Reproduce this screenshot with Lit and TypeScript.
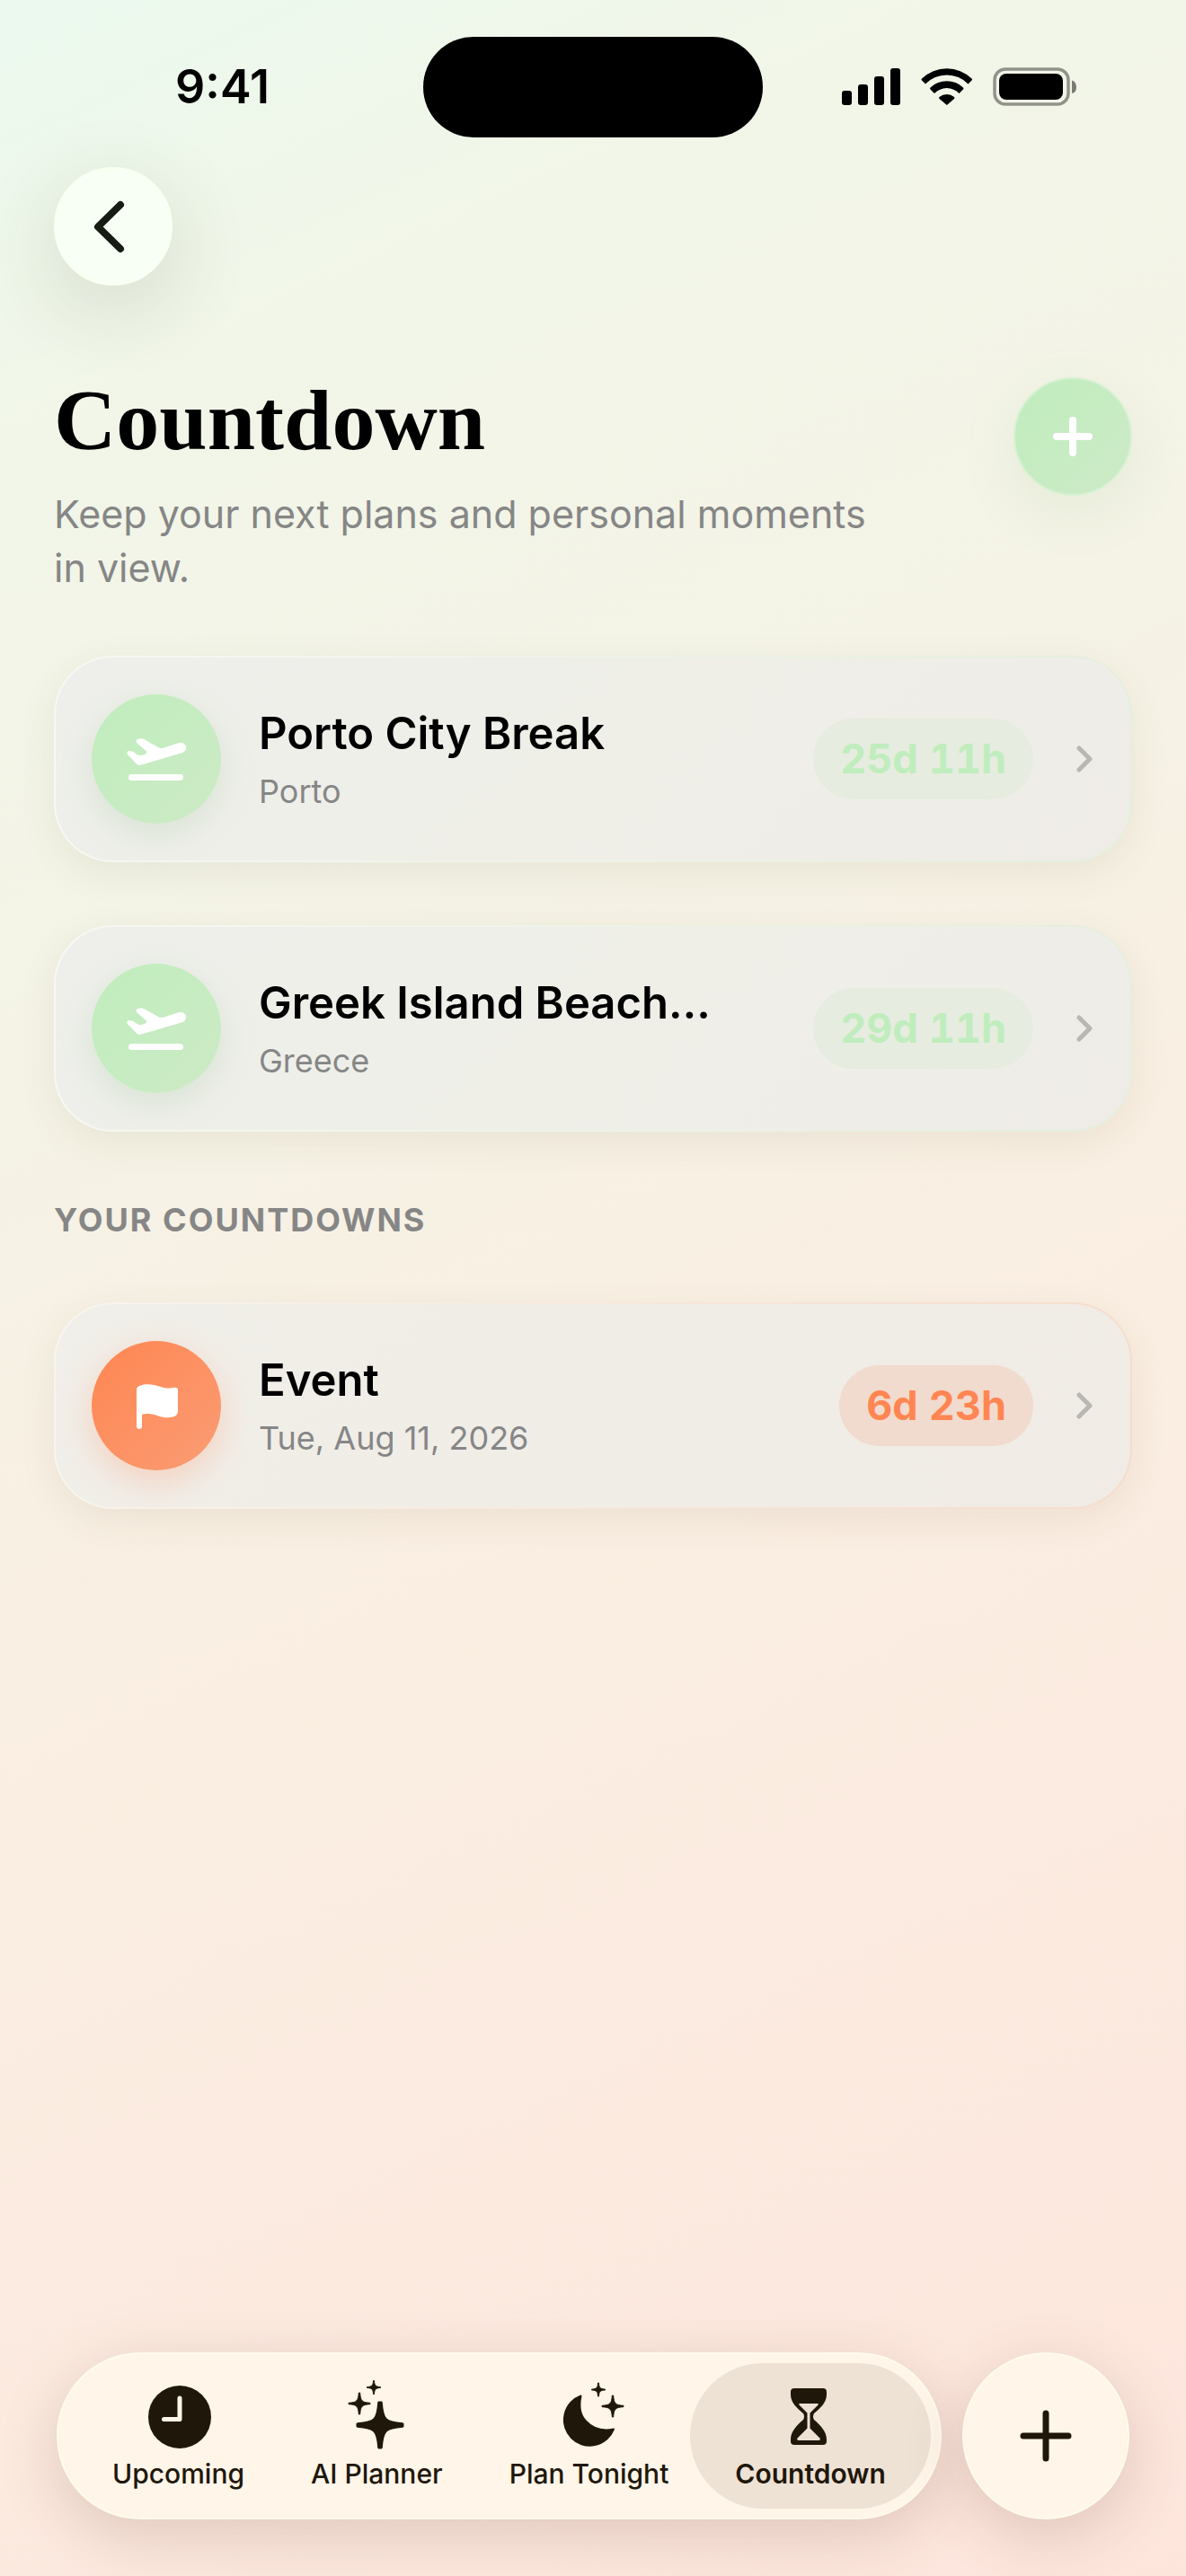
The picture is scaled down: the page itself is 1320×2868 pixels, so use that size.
import { LitElement, html, css, svg } from "lit";
import { customElement, property } from "lit/decorators.js";
import { classMap } from "lit/directives/class-map.js";

/** Four-pointed star with soft tips. */
const star = (cx: number, cy: number, r: number) => {
  const t = r * 0.05;
  const k = r * 0.22;
  const m = r * 0.1;
  return svg`<path stroke="currentColor" stroke-width=${r > 20 ? 3 : 1} stroke-linejoin="round" d="
    M${cx - t} ${cy - r + 1}
    C${cx - m} ${cy - k} ${cx - k} ${cy - m} ${cx - r + 1} ${cy - t}
    V${cy + t}
    C${cx - k} ${cy + m} ${cx - m} ${cy + k} ${cx - t} ${cy + r - 1}
    H${cx + t}
    C${cx + m} ${cy + k} ${cx + k} ${cy + m} ${cx + r - 1} ${cy + t}
    V${cy - t}
    C${cx + k} ${cy - m} ${cx + m} ${cy - k} ${cx + t} ${cy - r + 1}
    Z"/>`;
};

const icons = {
  departure: html`<svg viewBox="0 0 72 72" fill="currentColor" aria-hidden="true">
    <path d="M14 41.5L4 31C2.5 29 4 26.8 6 27C8 27.2 9.500 27.400 11 28.500Q17 33.500 21 31.500Q27 29.500 25 27.500L14 18C12.800 16 14 14.500 16 13.800C18 12.800 20 13 22 14L39 23.400Q41 24.500 43.500 23.700L60 18.500C64 17.200 68 18.600 69 21.800C69.800 25 68 28 64.500 29.300L21 42C18 43 16 43.200 14 41.500Z"/>
    <rect x="5" y="53" width="61" height="7" rx="3.500"/>
  </svg>`,
  flag: html`<svg viewBox="0 0 72 72" fill="currentColor" aria-hidden="true">
    <path d="M14 18Q14 15.500 16 14.500C24 10.500 33 12.500 41 15C47 17 51 17 56 15.800Q60 15 60 19V41.500Q60 46.500 55.500 48.200C50 50 44 49.500 38 47.500C31 45 26 44.500 20 45.800V59Q20 62 17 62Q14 62 14 59Z"/>
  </svg>`,
  clock: html`<svg viewBox="0 0 80 80" aria-hidden="true">
    <circle cx="41" cy="43" r="35" fill="currentColor"/>
    <path d="M41 22V45.500H23.500" fill="none" stroke="#fff6ea" stroke-width="5" stroke-linecap="round" stroke-linejoin="round"/>
  </svg>`,
  sparkles: html`<svg viewBox="0 0 80 80" fill="currentColor" aria-hidden="true">
    ${star(44, 52, 26)}${star(21, 28, 13)}${star(37, 10, 8.5)}
  </svg>`,
  moon: html`<svg viewBox="0 0 80 80" fill="currentColor" aria-hidden="true">
    <path stroke="currentColor" stroke-width="2" stroke-linejoin="round" d="M31.500 19.500C29 31 30.500 41 37.500 48C45 56 56 59 68 56.500A28.500 28.500 0 1 1 31.500 19.500Z"/>
    ${star(67, 31, 13)}${star(51, 12.5, 8.5)}
  </svg>`,
  hourglass: html`<svg viewBox="0 0 80 80" fill="currentColor" aria-hidden="true">
    <path fill-rule="evenodd" d="M22 11H54Q58 11 58 15V18C58 27 51 33 44 39Q42 42.500 44 46C51 52 58 59 58 68V70Q58 74 54 74H22Q18 74 18 70V68C18 59 25 52 32 46Q34 42.500 32 39C25 33 18 27 18 18V15Q18 11 22 11ZM28 28Q26.500 28 27.500 29.500L36.500 38.500V55.500L25.500 66.500Q24.500 69 27 69H49Q51.500 69 50.500 66.500L39.500 55.500V38.500L48.500 29.500Q49.500 28 48 28Z"/>
  </svg>`,
};

type IconName = keyof typeof icons;

interface Countdown {
  title: string;
  detail: string;
  left: string;
  icon: IconName;
  tone: "mint" | "coral";
}

const plans: Countdown[] = [
  { title: "Porto City Break", detail: "Porto", left: "25d 11h", icon: "departure", tone: "mint" },
  { title: "Greek Island Beach…", detail: "Greece", left: "29d 11h", icon: "departure", tone: "mint" },
];

const personal: Countdown[] = [
  { title: "Event", detail: "Tue, Aug 11, 2026", left: "6d 23h", icon: "flag", tone: "coral" },
];

const tabs: { label: string; icon: IconName }[] = [
  { label: "Upcoming", icon: "clock" },
  { label: "AI Planner", icon: "sparkles" },
  { label: "Plan Tonight", icon: "moon" },
  { label: "Countdown", icon: "hourglass" },
];

@customElement("status-bar")
export class StatusBar extends LitElement {
  static styles = css`
    :host {
      display: grid;
      grid-template-columns: 1fr 378px 1fr;
      align-items: center;
      height: 112px;
      padding: 41px 60px 0;
    }
    .time {
      justify-self: center;
      font-size: 52px;
      line-height: 60px;
      font-weight: 600;
      padding-right: 36px;
    }
    .island {
      height: 112px;
      border-radius: 56px;
      background: #000;
    }
    .signals {
      justify-self: end;
      display: block;
      width: 264px;
      height: 48px;
      margin-right: 60px;
    }
  `;

  render() {
    return html`
      <div class="time">9:41</div>
      <div class="island"></div>
      <svg class="signals" viewBox="0 0 264 48" role="img" aria-label="Signal, Wi-Fi and battery">
        <rect x="1" y="28" width="11" height="16" rx="3"/>
        <rect x="19" y="21" width="11" height="23" rx="3"/>
        <rect x="37" y="12" width="11" height="32" rx="3"/>
        <rect x="55" y="3" width="11" height="41" rx="3"/>
        <path d="M90 14.500A40 40 0 0 1 145.500 14.500Q146.500 15.500 145.500 16.500L141.500 20.500A33 33 0 0 0 94 20.500L90 16.500Q89 15.500 90 14.500Z"/>
        <path d="M99.500 24.500A26.500 26.500 0 0 1 136 24.500Q137 25.500 136 26.500L131.500 31A19 19 0 0 0 104 31L99.500 26.500Q98.500 25.500 99.500 24.500Z"/>
        <path d="M109.500 35A13 13 0 0 1 126 35Q127 36 126 37L117.800 44L109.500 37Q108.500 36 109.500 35Z"/>
        <rect x="171" y="4" width="82" height="39" rx="12" fill="none" stroke="#000" stroke-opacity=".4" stroke-width="3.500"/>
        <rect x="176" y="9" width="71" height="29" rx="8"/>
        <path d="M257 16.500Q262 18 262 24T257 31Z" fill-opacity=".5"/>
      </svg>
    `;
  }
}

@customElement("countdown-card")
export class CountdownCard extends LitElement {
  @property({ attribute: false }) item!: Countdown;

  static styles = css`
    :host {
      display: block;
    }
    .card {
      box-sizing: border-box;
      width: 100%;
      display: flex;
      align-items: center;
      padding: 41px 40px;
      border: 2px solid transparent;
      border-radius: 66px;
      font: inherit;
      color: #000;
      text-align: left;
      box-shadow: 0 12px 42px rgba(90, 80, 40, 0.08);
    }
    .mint {
      --tone: #c0edbd;
      --tone-end: #cdeac6;
      --pill: #e6ecdf;
      --glow: rgba(120, 180, 120, 0.18);
      background: linear-gradient(135deg, #eeefeb, #efefe8 50%, #efece8) padding-box,
        linear-gradient(100deg, #f7f8f3, #e5eedc) border-box;
    }
    .coral {
      --tone: #ff8652;
      --tone-end: #fa9c74;
      --pill: #f1dace;
      --glow: rgba(255, 134, 82, 0.28);
      background: linear-gradient(135deg, #f1efe9, #f0ebe5) padding-box,
        linear-gradient(100deg, #f8f5ef, #f6dccb) border-box;
    }
    .badge {
      flex: none;
      display: grid;
      place-items: center;
      width: 144px;
      height: 144px;
      margin-right: 42px;
      border-radius: 50%;
      color: #fff;
      background: linear-gradient(135deg, var(--tone), var(--tone-end));
      box-shadow: 0 12px 36px var(--glow);
    }
    .badge svg {
      width: 72px;
      height: 72px;
    }
    .text {
      flex: 1;
      min-width: 0;
      display: flex;
      flex-direction: column;
      gap: 12px;
    }
    .title {
      font-size: 49px;
      line-height: 60px;
      font-weight: 600;
      white-space: nowrap;
    }
    .detail {
      font-size: 36px;
      line-height: 44px;
      color: #868686;
    }
    .left {
      flex: none;
      padding: 15px 30px;
      border-radius: 45px;
      font-size: 45px;
      line-height: 60px;
      font-weight: 700;
      font-variant-numeric: tabular-nums;
      color: var(--tone);
      background: var(--pill);
    }
    .chevron {
      flex: none;
      width: 20px;
      height: 32px;
      margin-left: 48px;
    }
  `;

  render() {
    const { title, detail, left, icon, tone } = this.item;
    return html`
      <button class=${classMap({ card: true, [tone]: true })} type="button">
        <span class="badge">${icons[icon]}</span>
        <span class="text">
          <span class="title">${title}</span>
          <span class="detail">${detail}</span>
        </span>
        <span class="left">${left}</span>
        <svg class="chevron" viewBox="0 0 20 32" fill="none" stroke="#b9b7b4" stroke-width="5" stroke-linecap="round" stroke-linejoin="round" aria-hidden="true">
          <path d="M3 4L15 16L3 28"/>
        </svg>
      </button>
    `;
  }
}

@customElement("tab-bar")
export class TabBar extends LitElement {
  @property() selected = "Countdown";

  static styles = css`
    :host {
      display: flex;
      justify-content: space-between;
      padding: 0 63px 63px;
    }
    .tabs,
    .add {
      box-sizing: border-box;
      height: 186px;
      border-radius: 93px;
      border: 2px solid #fffbec;
      background: #fff5e9;
      color: #20170b;
      box-shadow: 0 18px 66px rgba(110, 70, 55, 0.2);
    }
    .tabs {
      display: flex;
      padding: 10px;
    }
    .tab {
      display: flex;
      flex-direction: column;
      align-items: center;
      padding: 17px 50px 0;
      border: 0;
      border-radius: 81px;
      background: none;
      color: inherit;
      font: inherit;
      font-size: 30px;
      line-height: 36px;
      font-weight: 500;
      white-space: nowrap;
    }
    .tab + .tab {
      margin-left: -26px;
    }
    .tab svg {
      display: block;
      width: 80px;
      height: 80px;
      margin-bottom: 8px;
    }
    .selected {
      background: #eee2d5;
      font-weight: 600;
    }
    .add {
      display: grid;
      place-items: center;
      width: 186px;
      padding: 0;
    }
    .add svg {
      width: 60px;
      height: 60px;
    }
  `;

  render() {
    return html`
      <nav class="tabs" aria-label="Main">
        ${tabs.map(
          (tab) => html`
            <button
              type="button"
              class=${classMap({ tab: true, selected: tab.label === this.selected })}
              @click=${() => (this.selected = tab.label)}
            >
              ${icons[tab.icon]}<span>${tab.label}</span>
            </button>
          `,
        )}
      </nav>
      <button class="add" type="button" aria-label="New plan">
        <svg viewBox="0 0 60 60" fill="none" stroke="currentColor" stroke-width="7" stroke-linecap="round" aria-hidden="true">
          <path d="M30 5V55M5 30H55"/>
        </svg>
      </button>
    `;
  }
}

@customElement("app-root")
export class AppRoot extends LitElement {
  static styles = css`
    :host {
      display: flex;
      flex-direction: column;
      min-height: 100vh;
      font-family: Inter, "Liberation Sans", sans-serif;
      color: #000;
      background: linear-gradient(155deg, #ebf9ee 0%, #f1f6e8 14%, #f4f3e6 34%, #f9efe2 54%, #fcebe0 74%, #fde5dc 100%);
    }
    .content {
      flex: 1;
      padding: 33px 60px 60px;
    }
    .round {
      display: grid;
      place-items: center;
      flex: none;
      box-sizing: border-box;
      width: 132px;
      height: 132px;
      padding: 0;
      border-radius: 50%;
    }
    .round svg {
      width: 60px;
      height: 60px;
    }
    .back {
      color: #171c12;
      background: #f8fff4;
      border: 2px solid #fafff0;
      box-shadow: 0 24px 90px rgba(60, 70, 40, 0.15);
    }
    .create {
      color: #fff;
      border: 2px solid #d8f1d3;
      background: linear-gradient(135deg, #c0edbd, #cdeac8);
      box-shadow: 0 18px 60px rgba(150, 190, 130, 0.14);
    }
    .intro {
      display: flex;
      align-items: flex-start;
      justify-content: space-between;
      margin: 102px 0 68px;
    }
    .heading {
      display: flex;
      flex-direction: column;
      gap: 26px;
      max-width: 940px;
    }
    h1 {
      margin: 0;
      font-family: "Liberation Serif", serif;
      font-size: 96px;
      line-height: 96px;
      font-weight: 700;
    }
    .lead {
      margin: 0;
      font-size: 43px;
      line-height: 60px;
      color: #868686;
    }
    .list {
      display: flex;
      flex-direction: column;
      gap: 70px;
    }
    h2 {
      margin: 0;
      padding-top: 6px;
      font-size: 36px;
      line-height: 44px;
      font-weight: 700;
      letter-spacing: 2px;
      text-transform: uppercase;
      color: #868686;
    }
  `;

  render() {
    return html`
      <status-bar></status-bar>
      <main class="content">
        <button class="round back" type="button" aria-label="Back">
          <svg viewBox="0 0 60 60" fill="none" stroke="currentColor" stroke-width="8" stroke-linecap="round" stroke-linejoin="round" aria-hidden="true">
            <path d="M38 6L13 30.500L38 55"/>
          </svg>
        </button>
        <header class="intro">
          <div class="heading">
            <h1>Countdown</h1>
            <p class="lead">Keep your next plans and personal moments in view.</p>
          </div>
          <button class="round create" type="button" aria-label="New countdown">
            <svg viewBox="0 0 60 60" fill="none" stroke="currentColor" stroke-width="8" stroke-linecap="round" aria-hidden="true">
              <path d="M30 12V48M12 30H48"/>
            </svg>
          </button>
        </header>
        <section class="list">
          ${plans.map((item) => html`<countdown-card .item=${item}></countdown-card>`)}
          <h2>Your countdowns</h2>
          ${personal.map((item) => html`<countdown-card .item=${item}></countdown-card>`)}
        </section>
      </main>
      <tab-bar></tab-bar>
    `;
  }
}
